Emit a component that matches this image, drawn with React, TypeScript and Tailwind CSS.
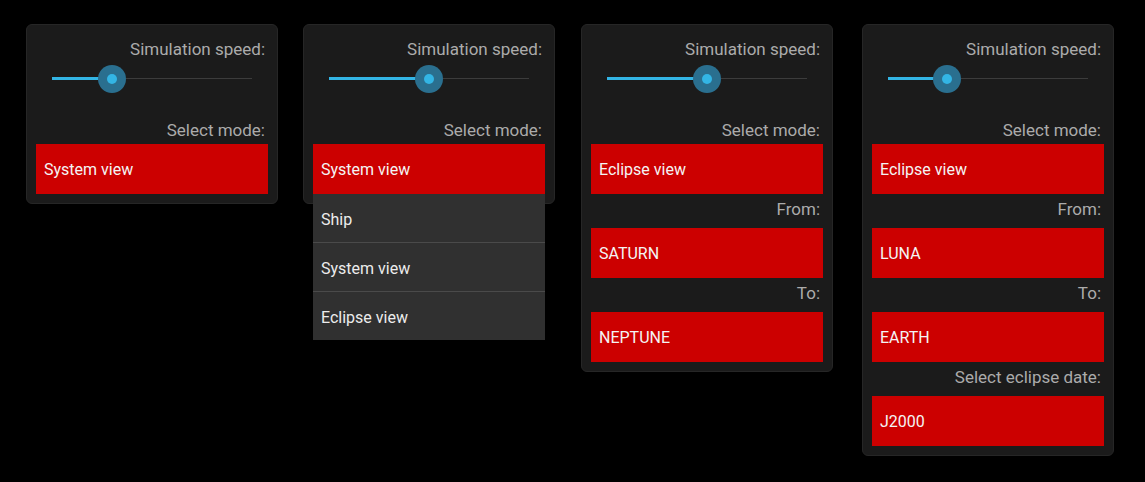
import React from "react";

type Row = { label: string; value: string };

function Slider({ pct }: { pct: number }) {
  return (
    <div className="relative h-[40px] mx-[16px]">
      <div className="absolute left-0 right-0 top-[19px] h-px bg-[#3c3c3c]" />
      <div
        className="absolute left-0 top-[18px] h-[3px] bg-[#33b5e5]"
        style={{ width: `${pct}%` }}
      />
      <div
        className="absolute top-[6px] w-[28px] h-[28px] -ml-[14px] rounded-full bg-[#2a6f8f] flex items-center justify-center"
        style={{ left: `${pct}%` }}
      >
        <div className="w-[10px] h-[10px] rounded-full bg-[#33b5e5]" />
      </div>
    </div>
  );
}

function Label({ children, first }: { children: React.ReactNode; first?: boolean }) {
  return (
    <div
      className={
        "text-right pr-[3px] text-[17px] leading-[19px] text-[#ababab] " +
        (first ? "" : "pt-[6px] pb-[9px]")
      }
    >
      {children}
    </div>
  );
}

function RedBox({ children }: { children: React.ReactNode }) {
  return (
    <div className="h-[50px] bg-[#cc0000] flex items-center pl-[8px] pt-[2px] text-[16px] text-[#f4f4f4]">
      {children}
    </div>
  );
}

function Panel({
  pct,
  mode,
  rows,
  dropdown,
  className,
}: {
  pct: number;
  mode: string;
  rows: Row[];
  dropdown?: boolean;
  className?: string;
}) {
  return (
    <div
      className={
        "relative w-[252px] rounded-[6px] border border-[#262626] bg-[#1b1b1b] pt-[15px] px-[9px] pb-[9px] " +
        (className ?? "")
      }
    >
      <Label first>Simulation speed:</Label>
      <Slider pct={pct} />
      <div className="mt-[22px] mb-[4px]">
        <Label first>Select mode:</Label>
      </div>
      <div className="relative">
        <RedBox>{mode}</RedBox>
        {dropdown && (
          <div className="absolute left-0 right-0 top-[50px] z-10 bg-[#303030] text-[16px] text-[#ececec]">
            <div className="h-[48px] flex items-center pl-[8px] pt-[3px]">Ship</div>
            <div className="h-px bg-[#4a4a4a]" />
            <div className="h-[48px] flex items-center pl-[8px] pt-[3px]">System view</div>
            <div className="h-px bg-[#4a4a4a]" />
            <div className="h-[48px] flex items-center pl-[8px] pt-[3px]">Eclipse view</div>
          </div>
        )}
      </div>
      {rows.map((r) => (
        <React.Fragment key={r.label}>
          <Label>{r.label}</Label>
          <RedBox>{r.value}</RedBox>
        </React.Fragment>
      ))}
    </div>
  );
}

export default function App() {
  return (
    <div
      className="w-[1145px] h-[482px] bg-black flex items-start pt-[24px] pl-[26px] overflow-hidden"
      style={{ fontFamily: "Roboto, 'Noto Sans', sans-serif" }}
    >
      <Panel pct={30} mode="System view" rows={[]} />
      <Panel pct={50} mode="System view" rows={[]} dropdown className="ml-[25px]" />
      <Panel
        pct={50}
        mode="Eclipse view"
        rows={[
          { label: "From:", value: "SATURN" },
          { label: "To:", value: "NEPTUNE" },
        ]}
        className="ml-[26px]"
      />
      <Panel
        pct={29.5}
        mode="Eclipse view"
        rows={[
          { label: "From:", value: "LUNA" },
          { label: "To:", value: "EARTH" },
          { label: "Select eclipse date:", value: "J2000" },
        ]}
        className="ml-[29px]"
      />
    </div>
  );
}
